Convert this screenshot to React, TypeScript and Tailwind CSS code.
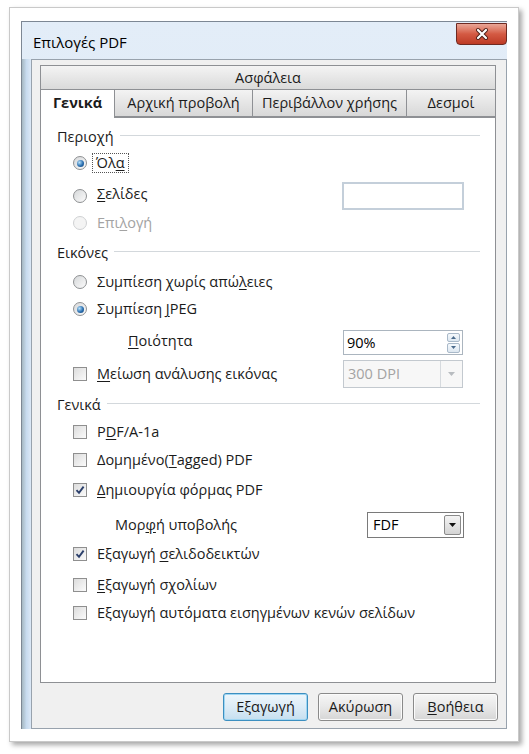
import React from "react";

function Radio({ checked, disabled }: { checked?: boolean; disabled?: boolean }) {
  return (
    <span
      className={`w-[14px] h-[14px] rounded-full border flex items-center justify-center shrink-0 ${
        disabled
          ? "border-[#cfd1d3] bg-[#f4f4f4]"
          : "border-[#8e9092] bg-linear-to-br from-[#d6d8da] to-[#fbfbfb]"
      }`}
    >
      {checked && (
        <span className="w-[7px] h-[7px] rounded-full bg-[radial-gradient(circle_at_35%_35%,#b8e2fb,#2a6fb0_55%,#153f6e)]" />
      )}
    </span>
  );
}

function Check({ checked }: { checked?: boolean }) {
  return (
    <span className="w-[14px] h-[14px] border border-[#8f8f8f] bg-linear-to-br from-[#dcdcdc] to-[#fbfbfb] flex items-center justify-center shrink-0">
      {checked && (
        <svg width="10" height="10" viewBox="0 0 10 10">
          <path d="M1.5 5.2 L4 7.8 L8.6 1.6" fill="none" stroke="#2b3f6b" strokeWidth="1.9" />
        </svg>
      )}
    </span>
  );
}

function Section({ label, mt }: { label: string; mt: string }) {
  return (
    <div className={`h-[20px] flex items-center pl-[16px] pr-[15px] ${mt}`}>
      <span>{label}</span>
      <div className="flex-1 h-px bg-[#d3d8dc] ml-[6px] mb-[3px]" />
    </div>
  );
}

function Btn({ children, primary }: { children: React.ReactNode; primary?: boolean }) {
  return (
    <div
      className={`w-[85px] h-[28px] rounded-[3px] border flex items-center justify-center bg-linear-to-b ${
        primary
          ? "border-[#3c8fc0] from-[#eef6fb] via-[#dcecf7] to-[#c6dfef] shadow-[inset_0_0_0_1px_#9fd6f3]"
          : "border-[#8a8a8a] from-[#f6f6f6] via-[#e8e8e8] to-[#d6d6d6] shadow-[inset_0_0_0_1px_#fbfbfb]"
      }`}
    >
      {children}
    </div>
  );
}

export default function App() {
  return (
    <div className="w-[529px] h-[754px] bg-white pt-[7px] pl-[9px] font-['Open_Sans','Noto_Sans',sans-serif] text-[14.5px] text-[#1b1b1b]">
      <div className="w-[510px] h-[735px] border border-[#c9c9c9] bg-white shadow-[3px_3px_5px_rgba(0,0,0,0.35)] pt-[13px] pl-[11px]">
        {/* window */}
        <div className="w-[486px] h-[708px] border-t border-l border-[#7d8794] bg-linear-to-b from-[#e3edf8] to-[#d3e2f2] flex flex-col">
          <div className="h-[37px] flex justify-between items-start shrink-0">
            <span className="pl-[11px] pt-[10px] leading-[20px] text-[15px] text-black">Επιλογές PDF</span>
            <div className="mt-[1px] w-[51px] h-[22px] rounded-b-[4px] border border-[#6e2a22] bg-linear-to-b from-[#e9a697] via-[#d45a43] to-[#bd3a25] flex items-center justify-center">
              <svg width="16" height="14" viewBox="0 0 16 14">
                <path d="M4 3 L12 11 M12 3 L4 11" stroke="#4a1d16" strokeWidth="4" strokeLinecap="round" />
                <path d="M4 3 L12 11 M12 3 L4 11" stroke="#ffffff" strokeWidth="2.2" strokeLinecap="round" />
              </svg>
            </div>
          </div>
          <div className="flex-1 flex">
            <div className="w-[9px] bg-linear-to-r from-[#a6b8c2] via-[#c8dbef] to-[#dce8f6]" />
            {/* client */}
            <div className="flex-1 bg-[#f0f0f0] border border-[#98a2ad] pt-[5px] pl-[8px] flex flex-col">
              {/* tabs */}
              <div className="w-[456px]">
                <div className="h-[24px] border border-b-0 border-[#8e9094] bg-linear-to-b from-[#f4f4f4] to-[#dadada] flex items-center justify-center">
                  Ασφάλεια
                </div>
                <div className="flex h-[28px] text-center">
                  <div className="relative z-10 w-[75px] h-[29px] border border-b-0 border-[#8e9094] bg-white font-bold flex items-center justify-center pb-[2px]">
                    Γενικά
                  </div>
                  <div className="w-[138px] border border-l-0 border-[#8e9094] bg-linear-to-b from-[#f3f3f3] to-[#d8d8d8] flex items-center justify-center">
                    Αρχική προβολή
                  </div>
                  <div className="w-[154px] border border-l-0 border-[#8e9094] bg-linear-to-b from-[#f3f3f3] to-[#d8d8d8] flex items-center justify-center">
                    Περιβάλλον χρήσης
                  </div>
                  <div className="w-[89px] border border-l-0 border-[#8e9094] bg-linear-to-b from-[#f3f3f3] to-[#d8d8d8] flex items-center justify-center">
                    Δεσμοί
                  </div>
                </div>
                {/* page */}
                <div className="h-[566px] border border-[#8e9094] bg-white pt-[9px] flex flex-col">
                  <Section label="Περιοχή" mt="" />
                  <div className="h-[24px] mt-[4px] flex items-center pl-[32px]">
                    <Radio checked />
                    <span className="ml-[6px] px-[3px] outline outline-1 outline-dotted outline-[#555] leading-[18px]">
                      Όλ<u className="underline-offset-2">α</u>
                    </span>
                  </div>
                  <div className="h-[28px] mt-[7px] flex items-center pl-[32px] pr-[31px]">
                    <Radio />
                    <span className="ml-[10px] mb-[5px]">
                      <u className="underline-offset-2">Σ</u>ελίδες
                    </span>
                    <div className="ml-auto w-[122px] h-[28px] border-2 border-[#c4cfda] bg-white" />
                  </div>
                  <div className="h-[24px] mt-[1px] flex items-center pl-[32px] text-[#a3a3a3]">
                    <Radio disabled />
                    <span className="ml-[10px]">
                      Επι<u className="underline-offset-2">λ</u>ογή
                    </span>
                  </div>
                  <Section label="Εικόνες" mt="mt-[8px]" />
                  <div className="h-[24px] mt-[7px] flex items-center pl-[32px]">
                    <Radio />
                    <span className="ml-[10px]">
                      Συμπίεση χωρίς απώ<u className="underline-offset-2">λ</u>ειες
                    </span>
                  </div>
                  <div className="h-[24px] mt-[3px] flex items-center pl-[32px]">
                    <Radio checked />
                    <span className="ml-[10px]">
                      Συμπίεση <u className="underline-offset-2">J</u>PEG
                    </span>
                  </div>
                  <div className="h-[25px] mt-[9px] flex items-center pl-[87px] pr-[32px]">
                    <span className="mb-[3px]">
                      <u className="underline-offset-2">Π</u>οιότητα
                    </span>
                    <div className="ml-auto w-[120px] h-[25px] border border-[#abb5bf] bg-white flex items-center pl-[3px] pr-[2px]">
                      <span className="flex-1 text-black">90%</span>
                      <div className="w-[13px] h-[20px] flex flex-col gap-px">
                        <div className="flex-1 border border-[#a9b9c9] rounded-[2px] bg-linear-to-b from-[#f5f9fc] to-[#dde7f0] flex items-center justify-center">
                          <svg width="5" height="3" viewBox="0 0 5 3"><path d="M0 3 L2.5 0 L5 3Z" fill="#4b6b8c" /></svg>
                        </div>
                        <div className="flex-1 border border-[#a9b9c9] rounded-[2px] bg-linear-to-b from-[#f5f9fc] to-[#dde7f0] flex items-center justify-center">
                          <svg width="5" height="3" viewBox="0 0 5 3"><path d="M0 0 L2.5 3 L5 0Z" fill="#4b6b8c" /></svg>
                        </div>
                      </div>
                    </div>
                  </div>
                  <div className="h-[28px] mt-[5px] flex items-center pl-[32px] pr-[32px]">
                    <Check />
                    <span className="ml-[10px]">
                      <u className="underline-offset-2">Μ</u>είωση ανάλυσης εικόνας
                    </span>
                    <div className="ml-auto w-[120px] h-[28px] border border-[#c3c9cf] bg-[#f7f7f7] flex items-center pl-[4px]">
                      <span className="flex-1 text-[#a3a3a3]">300 DPI</span>
                      <div className="w-[22px] h-full border-l border-[#d6dade] flex items-center justify-center">
                        <svg width="7" height="4" viewBox="0 0 7 4"><path d="M0 0 L3.5 4 L7 0Z" fill="#b8bcc0" /></svg>
                      </div>
                    </div>
                  </div>
                  <Section label="Γενικά" mt="mt-[7px]" />
                  <div className="h-[24px] mt-[5px] flex items-center pl-[32px]">
                    <Check />
                    <span className="ml-[10px]">
                      P<u className="underline-offset-2">D</u>F/A-1a
                    </span>
                  </div>
                  <div className="h-[24px] mt-[4px] flex items-center pl-[32px]">
                    <Check />
                    <span className="ml-[10px]">
                      Δομημένο(<u className="underline-offset-2">T</u>agged) PDF
                    </span>
                  </div>
                  <div className="h-[24px] mt-[6px] flex items-center pl-[32px]">
                    <Check checked />
                    <span className="ml-[10px]">
                      <u className="underline-offset-2">Δ</u>ημιουργία φόρμας PDF
                    </span>
                  </div>
                  <div className="h-[26px] mt-[10px] flex items-center pl-[74px] pr-[31px]">
                    <span>
                      Μορ<u className="underline-offset-2">φ</u>ή υποβολής
                    </span>
                    <div className="ml-auto w-[97px] h-[26px] border border-[#7a7a7a] bg-white flex items-center pl-[5px] pr-[2px]">
                      <span className="flex-1 text-black">FDF</span>
                      <div className="w-[17px] h-[20px] border border-[#8a8a8a] rounded-[2px] bg-linear-to-b from-[#f4f4f4] to-[#d4d4d4] flex items-center justify-center">
                        <svg width="7" height="4" viewBox="0 0 7 4"><path d="M0 0 L3.5 4 L7 0Z" fill="#111" /></svg>
                      </div>
                    </div>
                  </div>
                  <div className="h-[24px] mt-[4px] flex items-center pl-[32px]">
                    <Check checked />
                    <span className="ml-[10px]">
                      Εξαγωγή <u className="underline-offset-2">σ</u>ελιδοδεικτών
                    </span>
                  </div>
                  <div className="h-[24px] mt-[7px] flex items-center pl-[32px]">
                    <Check />
                    <span className="ml-[10px]">
                      <u className="underline-offset-2">Ε</u>ξαγωγή σχολίων
                    </span>
                  </div>
                  <div className="h-[24px] mt-[4px] flex items-center pl-[32px]">
                    <Check />
                    <span className="ml-[10px]">Εξαγωγή αυτόματα εισηγμένων κενών σελίδων</span>
                  </div>
                </div>
              </div>
              {/* buttons */}
              <div className="mt-[10px] flex justify-end gap-[10px] pr-[8px]">
                <Btn primary>Εξαγωγή</Btn>
                <Btn>Ακύρωση</Btn>
                <Btn>
                  <span>
                    <u className="underline-offset-2">Β</u>οήθεια
                  </span>
                </Btn>
              </div>
            </div>
          </div>
        </div>
      </div>
    </div>
  );
}
